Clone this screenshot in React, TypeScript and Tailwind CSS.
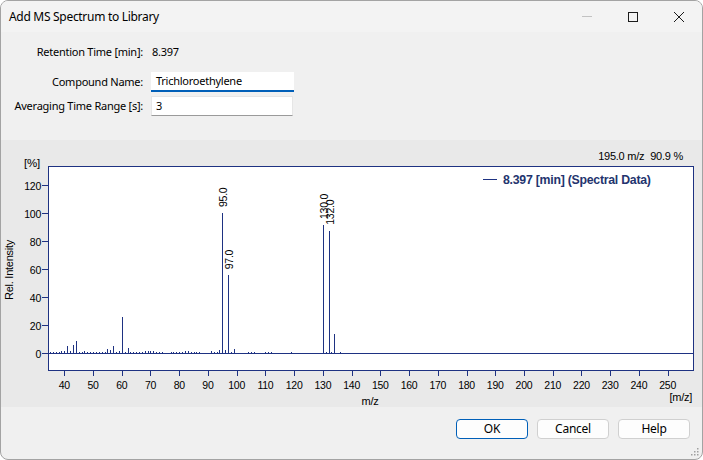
import React from "react";

// m/z -> relative intensity [%]
const peaks: [number, number][] = [
  [35, 0.7], [36, 0.7], [37, 0.7], [38, 0.7], [39, 1.4], [40, 1.4], [41, 5], [42, 1.4], [43, 5.8], [44, 8.6],
  [45, 0.7], [46, 0.7], [47, 1.4], [48, 0.7], [49, 0.7], [50, 0.7], [51, 0.7], [52, 0.7], [53, 0.7], [54, 0.7],
  [55, 2.9], [56, 2.1], [57, 5], [58, 0.7], [59, 1.4], [60, 25.7], [61, 0.7], [62, 3.6], [63, 0.7], [64, 0.7],
  [65, 0.7], [66, 0.7], [67, 0.7], [68, 1.4], [69, 1.4], [70, 1.4], [71, 1.4], [72, 0.7], [73, 0.7], [74, 0.7],
  [77, 0.7], [78, 0.7], [79, 0.7], [80, 0.7], [81, 0.7], [82, 1.4], [83, 1.4], [84, 0.7], [85, 0.7], [86, 0.7],
  [87, 0.7], [91, 1.4], [92, 0.7], [93, 0.7], [94, 2.1], [95, 100], [96, 2.1], [97, 55.5], [98, 0.7], [99, 2.9],
  [104, 0.7], [105, 0.7], [106, 0.7], [110, 0.7], [111, 0.7], [112, 0.7], [119, 0.7],
  [130, 91.4], [131, 0.7], [132, 87.3], [133, 0.7], [134, 13.6], [136, 0.7],
];

const labelled = [95, 97, 130, 132];
const navy = "#1e3282";

const xOf = (mz: number) => 64.3 + (mz - 40) * 2.873;
const yOf = (v: number) => 353 - v * 1.4;

function Spectrum() {
  const xTicks = Array.from({ length: 22 }, (_, i) => 40 + i * 10);
  const yTicks = [0, 20, 40, 60, 80, 100, 120];
  return (
    <svg width={701} height={267} viewBox="1 140 701 267" className="block shrink-0" fontFamily="'Liberation Sans', Arial, sans-serif">
      <rect x={1} y={140} width={701} height={267} fill="#e9e9e9" />
      <text x={683} y={156} textAnchor="end" dominantBaseline="central" fontSize={11} fill="#000">
        195.0 m/z<tspan dx={6}>90.9 %</tspan>
      </text>
      <text x={32} y={163} textAnchor="middle" dominantBaseline="central" fontSize={11.5} fill="#000">[%]</text>
      <text transform="translate(9 270) rotate(-90)" textAnchor="middle" dominantBaseline="central" fontSize={11} fill="#000">
        Rel. Intensity
      </text>

      <rect x={48.5} y={166.5} width={645} height={204} fill="#fff" stroke={navy} shapeRendering="crispEdges" />
      <line x1={48} x2={694} y1={353.5} y2={353.5} stroke={navy} shapeRendering="crispEdges" />

      {yTicks.map((v) => (
        <g key={v}>
          <line x1={42} x2={48} y1={Math.round(yOf(v)) + 0.5} y2={Math.round(yOf(v)) + 0.5} stroke={navy} shapeRendering="crispEdges" />
          <text x={41} y={yOf(v) + 0.5} textAnchor="end" dominantBaseline="central" fontSize={10.5} fill="#000">{v}</text>
        </g>
      ))}

      {xTicks.map((m) => (
        <g key={m}>
          <line x1={Math.round(xOf(m)) + 0.5} x2={Math.round(xOf(m)) + 0.5} y1={371} y2={376} stroke={navy} shapeRendering="crispEdges" />
          <text x={xOf(m)} y={384.5} textAnchor="middle" dominantBaseline="central" fontSize={10.5} fill="#000">{m}</text>
        </g>
      ))}
      <text x={370} y={401} textAnchor="middle" dominantBaseline="central" fontSize={11} fill="#000">m/z</text>
      <text x={692} y={397} textAnchor="end" dominantBaseline="central" fontSize={11} fill="#000">[m/z]</text>

      {peaks.map(([m, v]) => {
        const x = Math.round(xOf(m)) + 0.5;
        return <line key={m} x1={x} x2={x} y1={353} y2={yOf(v)} stroke={navy} strokeWidth={1.2} shapeRendering="crispEdges" />;
      })}
      {peaks
        .filter(([m]) => labelled.includes(m))
        .map(([m, v]) => (
          <text
            key={m}
            transform={`translate(${xOf(m) + 1} ${yOf(v) - 6}) rotate(-90)`}
            dominantBaseline="central"
            fontSize={10.5}
            fill="#000"
          >
            {m.toFixed(1)}
          </text>
        ))}

      <line x1={483} x2={497} y1={179.5} y2={179.5} stroke={navy} shapeRendering="crispEdges" />
      <text x={503} y={179.5} dominantBaseline="central" fontSize={12.3} fontWeight="bold" fill="#23346e">
        8.397 [min] (Spectral Data)
      </text>
    </svg>
  );
}

export default function App() {
  return (
    <div className="w-[703px] h-[460px] bg-[#f0f0f0] border border-[#a3a3a3] rounded-[8px] overflow-hidden flex flex-col relative text-black font-['Noto_Sans',sans-serif] text-[11px] tracking-[-0.25px]">
      {/* title bar */}
      <div className="h-[31px] bg-[#f3f3f3] flex items-center shrink-0">
        <div className="pl-[8px] flex-1 text-[12px] tracking-[-0.3px] leading-none">Add MS Spectrum to Library</div>
        <div className="flex items-center h-full">
          <div className="w-[46px] h-full flex items-center justify-center">
            <div className="w-[10px] h-px bg-[#c2c2c2]" />
          </div>
          <div className="w-[46px] h-full flex items-center justify-center">
            <div className="w-[10px] h-[10px] border border-[#1b1b1b]" />
          </div>
          <div className="w-[46px] h-full flex items-center justify-center">
            <svg width="12" height="12" viewBox="0 0 12 12">
              <path d="M1 1 L11 11 M11 1 L1 11" stroke="#1b1b1b" strokeWidth="1" />
            </svg>
          </div>
        </div>
      </div>

      {/* form */}
      <div className="h-[108px] shrink-0 pt-[10px] flex flex-col">
        <div className="flex items-center h-[20px]">
          <div className="w-[142px] text-right whitespace-nowrap">Retention Time [min]:</div>
          <div className="pl-[9px]">8.397</div>
        </div>
        <div className="flex items-center h-[20px] mt-[10px]">
          <div className="w-[142px] text-right whitespace-nowrap">Compound Name:</div>
          <div className="ml-[8px] w-[143px] h-[20px] bg-white border-b-2 border-[#005fb8] flex items-center pl-[5px]">
            Trichloroethylene
          </div>
        </div>
        <div className="flex items-center h-[20px] mt-[4px]">
          <div className="w-[142px] text-right whitespace-nowrap">Averaging Time Range [s]:</div>
          <div className="ml-[8px] w-[142px] h-[20px] bg-white border border-[#e6e6e6] border-b-[#9a9a9a] flex items-center pl-[4px]">
            3
          </div>
        </div>
      </div>

      {/* spectrum */}
      <Spectrum />

      {/* buttons */}
      <div className="flex-1 flex justify-end items-start pt-[12px] pr-[12px] gap-[9px]">
        <button className="w-[72px] h-[20px] rounded-[4px] bg-[#fdfdfd] border border-[#005fb8] text-[12px] leading-none">OK</button>
        <button className="w-[72px] h-[20px] rounded-[4px] bg-[#fdfdfd] border border-[#d0d0d0] text-[12px] leading-none">Cancel</button>
        <button className="w-[72px] h-[20px] rounded-[4px] bg-[#fdfdfd] border border-[#d0d0d0] text-[12px] leading-none">Help</button>
      </div>
      <svg className="absolute right-[3px] bottom-[3px]" width="8" height="8" viewBox="0 0 8 8">
        {[[6, 0], [3, 3], [6, 3], [0, 6], [3, 6], [6, 6]].map(([x, y]) => (
          <rect key={`${x}-${y}`} x={x} y={y} width="1.5" height="1.5" fill="#a0a0a0" />
        ))}
      </svg>
    </div>
  );
}
